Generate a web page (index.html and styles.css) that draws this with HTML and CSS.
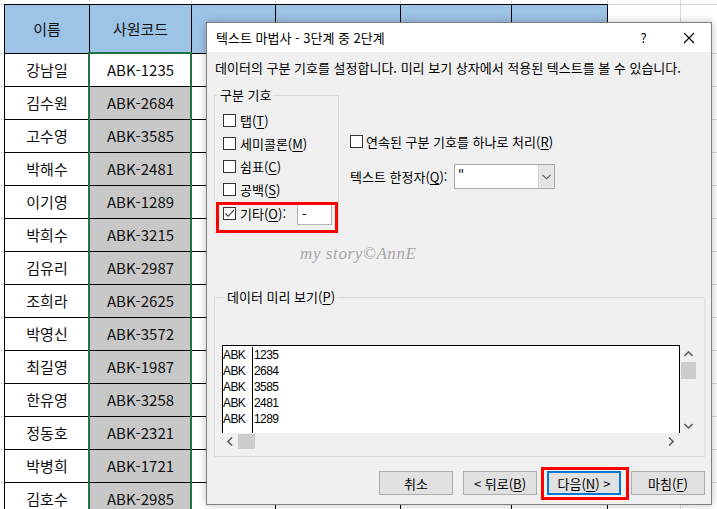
FILE: index.html
```html
<!DOCTYPE html>
<html lang="ko">
<head>
  <meta charset="utf-8">
  <link rel="stylesheet" href="styles.css">
</head>
<body>

  <div class="sheet">
    <div class="grid">
      <div class="hd">이름</div><div class="hd">사원코드</div><div class="hd"></div><div class="hd"></div><div class="hd"></div><div class="hd"></div>
      <div>강남일</div><div class="active">ABK-1235</div><div></div><div></div><div></div><div></div>
      <div>김수원</div><div class="sel">ABK-2684</div><div></div><div></div><div></div><div></div>
      <div>고수영</div><div class="sel">ABK-3585</div><div></div><div></div><div></div><div></div>
      <div>박해수</div><div class="sel">ABK-2481</div><div></div><div></div><div></div><div></div>
      <div>이기영</div><div class="sel">ABK-1289</div><div></div><div></div><div></div><div></div>
      <div>박희수</div><div class="sel">ABK-3215</div><div></div><div></div><div></div><div></div>
      <div>김유리</div><div class="sel">ABK-2987</div><div></div><div></div><div></div><div></div>
      <div>조희라</div><div class="sel">ABK-2625</div><div></div><div></div><div></div><div></div>
      <div>박영신</div><div class="sel">ABK-3572</div><div></div><div></div><div></div><div></div>
      <div>최길영</div><div class="sel">ABK-1987</div><div></div><div></div><div></div><div></div>
      <div>한유영</div><div class="sel">ABK-3258</div><div></div><div></div><div></div><div></div>
      <div>정동호</div><div class="sel">ABK-2321</div><div></div><div></div><div></div><div></div>
      <div>박병희</div><div class="sel">ABK-1721</div><div></div><div></div><div></div><div></div>
      <div>김호수</div><div class="sel">ABK-2985</div><div></div><div></div><div></div><div></div>
    </div>
    <div class="selection"></div>
  </div>

  <!-- Text import wizard, step 2 -->
  <div class="dialog">
    <div class="titlebar">
      <span class="title">텍스트 마법사 - 3단계 중 2단계</span>
      <span class="tb-btn">?</span>
      <span class="tb-btn">
        <svg width="12" height="12" viewBox="0 0 12 12"><path d="M1 1 L11 11 M11 1 L1 11" stroke="#000" stroke-width="1.1" fill="none"/></svg>
      </span>
    </div>

    <div class="body">
      <p class="desc">데이터의 구분 기호를 설정합니다. 미리 보기 상자에서 적용된 텍스트를 볼 수 있습니다.</p>

      <div class="options">
        <fieldset class="delims">
          <legend>구분 기호</legend>
          <div class="chk"><span class="box"></span>탭(<u>T</u>)</div>
          <div class="chk"><span class="box"></span>세미콜론(<u>M</u>)</div>
          <div class="chk"><span class="box"></span>쉼표(<u>C</u>)</div>
          <div class="chk"><span class="box"></span>공백(<u>S</u>)</div>
          <div class="chk other callout">
            <span class="box">
              <svg width="11" height="11" viewBox="0 0 11 11"><path d="M1.5 5.5 L4.2 8.3 L9.8 2.2" stroke="#333" stroke-width="1.1" fill="none"/></svg>
            </span>기타(<u>O</u>):
            <span class="other-input">-</span>
          </div>
        </fieldset>

        <div class="side">
          <div class="chk"><span class="box"></span>연속된 구분 기호를 하나로 처리(<u>R</u>)</div>
          <div class="qualifier">
            <span class="q-label">텍스트 한정자(<u>Q</u>):</span>
            <span class="combo">
              <span class="combo-value">"</span>
              <span class="combo-btn">
                <svg width="9" height="6" viewBox="0 0 9 6"><path d="M0.5 0.8 L4.5 4.8 L8.5 0.8" stroke="#555" stroke-width="1.1" fill="none"/></svg>
              </span>
            </span>
          </div>
        </div>
      </div>

      <div class="watermark">my story©AnnE</div>

      <fieldset class="preview">
        <legend>데이터 미리 보기(<u>P</u>)</legend>
        <div class="listbox">
          <div class="list">
            <div class="col1">ABK<br>ABK<br>ABK<br>ABK<br>ABK</div>
            <div class="col2">1235<br>2684<br>3585<br>2481<br>1289</div>
          </div>
          <div class="vscroll">
            <svg width="9" height="6" viewBox="0 0 9 6"><path d="M0.5 5 L4.5 1 L8.5 5" stroke="#606060" stroke-width="1.6" fill="none"/></svg>
            <span class="vthumb"></span>
            <span class="spacer"></span>
            <svg width="9" height="6" viewBox="0 0 9 6"><path d="M0.5 1 L4.5 5 L8.5 1" stroke="#606060" stroke-width="1.6" fill="none"/></svg>
          </div>
          <div class="hscroll">
            <svg width="6" height="9" viewBox="0 0 6 9"><path d="M5 0.5 L1 4.5 L5 8.5" stroke="#606060" stroke-width="1.6" fill="none"/></svg>
            <span class="hthumb"></span>
            <span class="spacer"></span>
            <svg width="6" height="9" viewBox="0 0 6 9"><path d="M1 0.5 L5 4.5 L1 8.5" stroke="#606060" stroke-width="1.6" fill="none"/></svg>
          </div>
          <div class="corner"></div>
        </div>
      </fieldset>

      <div class="buttons">
        <button type="button">취소</button>
        <button type="button">&lt; 뒤로(<u>B</u>)</button>
        <button type="button" class="default callout">다음(<u>N</u>) &gt;</button>
        <button type="button">마침(<u>F</u>)</button>
      </div>
    </div>
  </div>

</body>
</html>
```

FILE: styles.css
```css
body {
  margin: 0;
  width: 717px;
  height: 509px;
  overflow: hidden;
  position: relative;
  font-family: "Noto Sans CJK KR", "Noto Sans", sans-serif;
  background:
    linear-gradient(#d9d9d9, #d9d9d9) 0 4px / 100% 1px no-repeat,
    repeating-linear-gradient(to bottom, #d9d9d9 0 1px, transparent 1px 33px) 0 53px / 100% 456px no-repeat,
    linear-gradient(#d9d9d9, #d9d9d9) 680px 0 / 1px 100% no-repeat,
    linear-gradient(#d9d9d9, #d9d9d9) 89px 0 / 1px 4px no-repeat,
    linear-gradient(#d9d9d9, #d9d9d9) 191px 0 / 1px 4px no-repeat,
    linear-gradient(#d9d9d9, #d9d9d9) 275px 0 / 1px 4px no-repeat,
    linear-gradient(#d9d9d9, #d9d9d9) 400px 0 / 1px 4px no-repeat,
    linear-gradient(#d9d9d9, #d9d9d9) 511px 0 / 1px 4px no-repeat,
    linear-gradient(#d9d9d9, #d9d9d9) 607px 0 / 1px 4px no-repeat,
    #fff;
}

/* ---- worksheet ---- */
.sheet {
  padding: 4px 0 0 4px;
}

.grid {
  display: grid;
  grid-template-columns: 85px 102px 84px 125px 111px 96px;
  grid-template-rows: 49px;
  grid-auto-rows: 33px;
  width: max-content;
  border-left: 1px solid #000;
  border-top: 1px solid #000;
  background: #fff;
  font-size: 15px;
  color: #111;
}

.grid > div {
  box-sizing: border-box;
  border-right: 1px solid #000;
  border-bottom: 1px solid #000;
  display: flex;
  align-items: center;
  justify-content: center;
  line-height: 18px;
}

.grid .hd {
  background: #9dc3e6;
}

.grid .sel {
  background: #c8c8c8;
}

.selection {
  position: absolute;
  left: 88px;
  top: 52px;
  width: 104px;
  height: 470px;
  box-sizing: border-box;
  border: 2px solid #217346;
}

/* ---- dialog ---- */
.dialog {
  position: absolute;
  left: 206px;
  top: 22px;
  width: 506px;
  height: 483px;
  box-sizing: border-box;
  border: 1px solid #7f7f7f;
  box-shadow: 0 0 8px rgba(0, 0, 0, 0.25);
  display: flex;
  flex-direction: column;
  font-size: 13px;
  color: #000;
}

.titlebar {
  height: 29px;
  background: #fff;
  display: flex;
  align-items: center;
  padding-left: 9px;
}

.title {
  flex: 1;
  line-height: 16px;
}

.tb-btn {
  width: 45px;
  height: 29px;
  display: flex;
  align-items: center;
  justify-content: center;
  font-size: 13px;
}

.body {
  flex: 1;
  background: #f0f0f0;
  padding: 8px 6px 0 7px;
}

.desc {
  margin: 0 0 0 1px;
  line-height: 16px;
  white-space: nowrap;
}

u {
  text-decoration-thickness: 1px;
  text-underline-offset: 2px;
}

.options {
  display: flex;
  margin-top: 11px;
}

fieldset {
  margin: 0;
  padding: 0;
  border: 1px solid #dcdcdc;
  box-sizing: border-box;
}

legend {
  margin-left: 3px;
  padding: 0 2px;
  line-height: 16px;
}

.delims {
  width: 125px;
  height: 146px;
  padding-top: 6px;
}

.chk {
  display: flex;
  align-items: center;
  height: 23px;
  padding-left: 8px;
  white-space: nowrap;
}

.box {
  width: 13px;
  height: 13px;
  box-sizing: border-box;
  border: 1px solid #333;
  background: #fff;
  margin-right: 4px;
  display: flex;
  align-items: center;
  justify-content: center;
  flex: none;
}

.chk.other {
  height: 25px;
  padding-right: 6px;
}

.other-input {
  margin-left: auto;
  width: 35px;
  height: 22px;
  box-sizing: border-box;
  border: 1px solid #b4b4b4;
  background: #fff;
  padding-left: 4px;
  line-height: 19px;
}

/* red annotation boxes drawn over the screenshot */
.callout {
  position: relative;
}

.callout::after {
  content: "";
  position: absolute;
  border: 3px solid #ff0000;
  pointer-events: none;
}

.chk.other::after {
  left: 1px;
  right: 0;
  top: 1px;
  bottom: -7px;
}

.side {
  margin-left: 11px;
  padding-top: 46px;
}

.side .chk {
  padding-left: 0;
  height: 16px;
}

.side .box {
  margin-right: 3px;
}

.qualifier {
  display: flex;
  align-items: center;
  margin-top: 15px;
}

.q-label {
  width: 104px;
  white-space: nowrap;
}

.combo {
  display: flex;
  width: 101px;
  height: 25px;
  box-sizing: border-box;
  border: 1px solid #a8a8a8;
  background: #fff;
}

.combo-value {
  flex: 1;
  padding-left: 3px;
  line-height: 21px;
}

.combo-btn {
  width: 15px;
  background: #e5e5e5;
  border-left: 1px solid #d0d0d0;
  display: flex;
  align-items: center;
  justify-content: center;
}

.watermark {
  margin: 13px 0 0 86px;
  line-height: 16px;
  font-family: "Liberation Serif", serif;
  font-style: italic;
  font-size: 17px;
  color: #a6a6a6;
  letter-spacing: 0.6px;
}

.preview {
  width: 491px;
  height: 168px;
  margin-top: 27px;
  padding: 40px 0 0 7px;
}

.listbox {
  display: grid;
  grid-template-columns: 458px 17px;
  grid-template-rows: 88px 17px;
  width: 475px;
}

.list {
  background: #fff;
  border: 1px solid #000;
  border-bottom: 0;
  display: flex;
  font-family: "Liberation Sans", sans-serif;
  font-size: 12px;
  line-height: 16px;
  letter-spacing: -0.6px;
  padding-top: 1px;
}

.col1 {
  width: 29px;
  border-right: 1px solid #000;
}

.col2 {
  padding-left: 1px;
}

.vscroll {
  display: flex;
  flex-direction: column;
  align-items: center;
  padding: 6px 0 4px;
}

.vthumb {
  width: 15px;
  height: 17px;
  margin-top: 5px;
  background: #cdcdcd;
}

.spacer {
  flex: 1;
}

.hscroll {
  display: flex;
  align-items: center;
  padding: 0 6px 0 5px;
}

.hthumb {
  width: 17px;
  height: 15px;
  margin-left: 5px;
  background: #cdcdcd;
}

.buttons {
  display: flex;
  justify-content: flex-end;
  gap: 10px;
  margin-top: 14px;
}

button {
  width: 74px;
  height: 24px;
  padding: 0;
  font-family: inherit;
  font-size: 13px;
  color: #000;
  background: #e1e1e1;
  border: 1px solid #adadad;
}

button.default {
  border: 2px solid #0078d7;
}

button.callout::after {
  left: -8px;
  right: -10px;
  top: -6px;
  bottom: -7px;
}
```
